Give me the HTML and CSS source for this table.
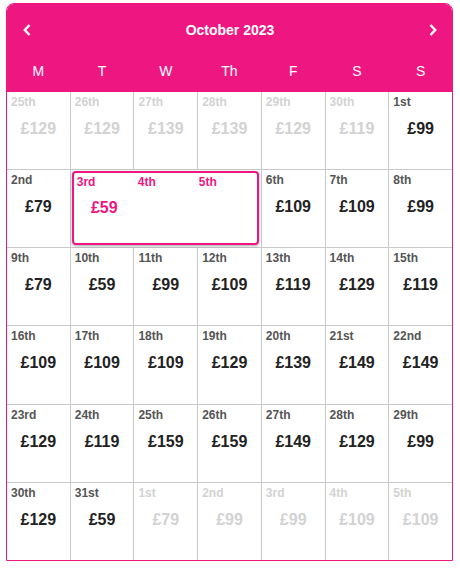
FILE: index.html
```html
<!DOCTYPE html>
<html lang="en">
<head>
<meta charset="utf-8">
<title>October 2023</title>
<link rel="stylesheet" href="styles.css">
</head>
<body>
<div class="calendar">
  <div class="cal-head">
    <div class="nav">
      <svg class="chev" width="8" height="12" viewBox="0 0 8 12"><path d="M6.5 1 L1.8 6 L6.5 11" fill="none" stroke="#fff" stroke-width="2.4"/></svg>
      <div class="title">October 2023</div>
      <svg class="chev" width="8" height="12" viewBox="0 0 8 12"><path d="M1.5 1 L6.2 6 L1.5 11" fill="none" stroke="#fff" stroke-width="2.4"/></svg>
    </div>
    <div class="weekdays">
      <div>M</div><div>T</div><div>W</div><div>Th</div><div>F</div><div>S</div><div>S</div>
    </div>
  </div>
  <div class="grid">
    <div class="cell off"><div class="date">25th</div><div class="price">£129</div></div>
    <div class="cell off"><div class="date">26th</div><div class="price">£129</div></div>
    <div class="cell off"><div class="date">27th</div><div class="price">£139</div></div>
    <div class="cell off"><div class="date">28th</div><div class="price">£139</div></div>
    <div class="cell off"><div class="date">29th</div><div class="price">£129</div></div>
    <div class="cell off"><div class="date">30th</div><div class="price">£119</div></div>
    <div class="cell"><div class="date">1st</div><div class="price">£99</div></div>

    <div class="cell"><div class="date">2nd</div><div class="price">£79</div></div>
    <div class="cell span3">
      <div class="selected">
        <div class="sub"><div class="date">3rd</div><div class="price">£59</div></div>
        <div class="sub"><div class="date">4th</div></div>
        <div class="sub"><div class="date">5th</div></div>
      </div>
    </div>
    <div class="cell"><div class="date">6th</div><div class="price">£109</div></div>
    <div class="cell"><div class="date">7th</div><div class="price">£109</div></div>
    <div class="cell"><div class="date">8th</div><div class="price">£99</div></div>

    <div class="cell"><div class="date">9th</div><div class="price">£79</div></div>
    <div class="cell"><div class="date">10th</div><div class="price">£59</div></div>
    <div class="cell"><div class="date">11th</div><div class="price">£99</div></div>
    <div class="cell"><div class="date">12th</div><div class="price">£109</div></div>
    <div class="cell"><div class="date">13th</div><div class="price">£119</div></div>
    <div class="cell"><div class="date">14th</div><div class="price">£129</div></div>
    <div class="cell"><div class="date">15th</div><div class="price">£119</div></div>

    <div class="cell"><div class="date">16th</div><div class="price">£109</div></div>
    <div class="cell"><div class="date">17th</div><div class="price">£109</div></div>
    <div class="cell"><div class="date">18th</div><div class="price">£109</div></div>
    <div class="cell"><div class="date">19th</div><div class="price">£129</div></div>
    <div class="cell"><div class="date">20th</div><div class="price">£139</div></div>
    <div class="cell"><div class="date">21st</div><div class="price">£149</div></div>
    <div class="cell"><div class="date">22nd</div><div class="price">£149</div></div>

    <div class="cell"><div class="date">23rd</div><div class="price">£129</div></div>
    <div class="cell"><div class="date">24th</div><div class="price">£119</div></div>
    <div class="cell"><div class="date">25th</div><div class="price">£159</div></div>
    <div class="cell"><div class="date">26th</div><div class="price">£159</div></div>
    <div class="cell"><div class="date">27th</div><div class="price">£149</div></div>
    <div class="cell"><div class="date">28th</div><div class="price">£129</div></div>
    <div class="cell"><div class="date">29th</div><div class="price">£99</div></div>

    <div class="cell"><div class="date">30th</div><div class="price">£129</div></div>
    <div class="cell"><div class="date">31st</div><div class="price">£59</div></div>
    <div class="cell off"><div class="date">1st</div><div class="price">£79</div></div>
    <div class="cell off"><div class="date">2nd</div><div class="price">£99</div></div>
    <div class="cell off"><div class="date">3rd</div><div class="price">£99</div></div>
    <div class="cell off"><div class="date">4th</div><div class="price">£109</div></div>
    <div class="cell off"><div class="date">5th</div><div class="price">£109</div></div>
  </div>
</div>
</body>
</html>
```
FILE: styles.css
```css
html, body {
  margin: 0;
  padding: 0;
  background: #fff;
}
body {
  font-family: "Liberation Sans", Arial, sans-serif;
}
.calendar {
  box-sizing: border-box;
  width: 447px;
  margin: 3px 0 0 6px;
  border: 1px solid #ee1681;
  border-radius: 8px 8px 0 0;
  overflow: hidden;
  background: #fff;
}
.cal-head {
  background: #ee1681;
  color: #fff;
}
.nav {
  height: 52px;
  display: flex;
  align-items: center;
  justify-content: space-between;
  padding: 0 15px 0 16px;
}
.chev {
  display: block;
}
.title {
  font-size: 14px;
  font-weight: bold;
  line-height: 52px;
}
.weekdays {
  display: grid;
  grid-template-columns: repeat(7, 1fr);
  column-gap: 1px;
  height: 36px;
  padding-bottom: 6px;
  box-sizing: border-box;
}
.weekdays div {
  text-align: center;
  font-size: 14px;
  line-height: 30px;
}
.grid {
  display: grid;
  grid-template-columns: repeat(7, 1fr);
  grid-template-rows: repeat(6, 1fr);
  gap: 1px;
  height: 468px;
  background: #c9c9c9;
}
.cell {
  background: #fff;
  padding: 3px 4px 0;
  min-width: 0;
}
.date {
  font-size: 12px;
  line-height: 14px;
  font-weight: bold;
  color: #555;
}
.price {
  margin-top: 10px;
  font-size: 16px;
  line-height: 20px;
  font-weight: bold;
  color: #222;
  text-align: center;
}
.off .date,
.off .price {
  color: #d2d2d2;
}
.span3 {
  grid-column: span 3;
  padding: 1px 2px 2px 1px;
  display: flex;
}
.selected {
  flex: 1;
  display: grid;
  grid-template-columns: repeat(3, 1fr);
  border: 2px solid #ee1681;
  border-radius: 4px;
  box-shadow: 0 1px 3px rgba(0, 0, 0, 0.35);
}
.sub {
  padding: 2px 3px 0;
}
.sub .date,
.sub .price {
  color: #ee1681;
}
.sub .price {
  margin-top: 9px;
}
```
